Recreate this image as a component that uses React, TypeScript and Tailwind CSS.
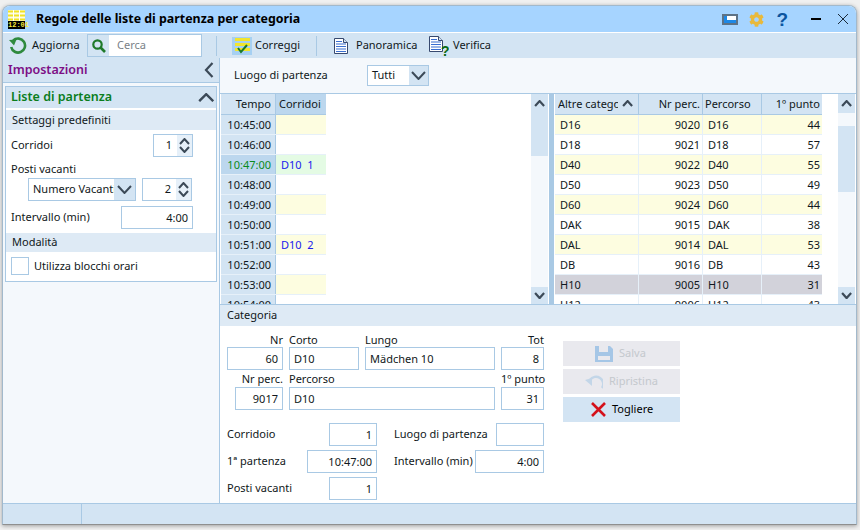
import { FaCog } from "react-icons/fa";

const timeRows = [
  { time: "10:45:00", text: "", bg: "bg-[#fdfde0]" },
  { time: "10:46:00", text: "", bg: "bg-white" },
  { time: "10:47:00", text: "D10  1", bg: "bg-[#e4fbe4]", active: true },
  { time: "10:48:00", text: "", bg: "bg-white" },
  { time: "10:49:00", text: "", bg: "bg-[#fdfde0]" },
  { time: "10:50:00", text: "", bg: "bg-white" },
  { time: "10:51:00", text: "D10  2", bg: "bg-[#fdfde0]" },
  { time: "10:52:00", text: "", bg: "bg-white" },
  { time: "10:53:00", text: "", bg: "bg-[#fdfde0]" },
  { time: "10:54:00", text: "", bg: "bg-white" },
];

const catRows = [
  ["D16", "9020", "D16", "44"],
  ["D18", "9021", "D18", "57"],
  ["D40", "9022", "D40", "55"],
  ["D50", "9023", "D50", "49"],
  ["D60", "9024", "D60", "44"],
  ["DAK", "9015", "DAK", "38"],
  ["DAL", "9014", "DAL", "53"],
  ["DB", "9016", "DB", "43"],
  ["H10", "9005", "H10", "31"],
  ["H12", "9006", "H12", "43"],
];

function Chev({ w, h, up, sw = 2 }: { w: number; h: number; up?: boolean; sw?: number }) {
  const pad = sw / 2;
  const pts = up
    ? `${pad},${h + pad} ${w / 2 + pad},${pad} ${w + pad},${h + pad}`
    : `${pad},${pad} ${w / 2 + pad},${h + pad} ${w + pad},${pad}`;
  return (
    <svg width={w + sw} height={h + sw} className="shrink-0">
      <polyline points={pts} fill="none" stroke="#3c4a58" strokeWidth={sw} />
    </svg>
  );
}

function Cross({ size, color, sw }: { size: number; color: string; sw: number }) {
  return (
    <svg width={size} height={size} viewBox={`0 0 ${size} ${size}`} className="shrink-0">
      <path d={`M1 1L${size - 1} ${size - 1}M${size - 1} 1L1 ${size - 1}`} stroke={color} strokeWidth={sw} />
    </svg>
  );
}

function Field({ value, className, right }: { value: string; className: string; right?: boolean }) {
  return (
    <div
      className={`h-[23px] border border-[#a9c9e4] bg-white px-[4px] leading-[21px] ${right ? "text-right" : ""} ${className}`}
    >
      {value}
    </div>
  );
}

function Spin({ value, className }: { value: string; className: string }) {
  return (
    <div className={`flex h-[23px] items-center border border-[#a9c9e4] bg-white ${className}`}>
      <span className="flex-1 pr-[4px] text-right">{value}</span>
      <div className="flex h-full w-[16px] flex-col justify-between border-l border-white bg-[#e6f0f9] py-[3px] pl-[2px]">
        <Chev w={9} h={5} up />
        <Chev w={9} h={5} />
      </div>
    </div>
  );
}

function ScrollBar({ thumbTop, thumbHeight }: { thumbTop: string; thumbHeight: string }) {
  return (
    <div className="flex h-full w-[17px] shrink-0 flex-col bg-[#f4f8fc]">
      <div className="flex h-[19px] items-center justify-center bg-[#d3e4f3]">
        <Chev w={9} h={5} up sw={2.2} />
      </div>
      <div className="flex-1">
        <div className={`${thumbTop} ${thumbHeight} bg-[#d3e4f3]`} />
      </div>
      <div className="flex h-[17px] items-center justify-center bg-[#d3e4f3]">
        <Chev w={9} h={5} sw={2.2} />
      </div>
    </div>
  );
}

function SheetIcon({ question }: { question?: boolean }) {
  return (
    <svg width={question ? 20 : 14} height={question ? 20 : 16} viewBox={question ? "0 0 20 20" : "0 0 14 16"}>
      <path d="M0.5 0.5h9l4 4v11h-13z" fill="#fff" stroke="#37496f" />
      <path d="M9.5 0.5v4h4" fill="#d3e4f3" stroke="#37496f" />
      <path d="M2 3.5h6M2 6h10M2 8.5h10M2 11h10M2 13.5h10" stroke="#3a6fd0" strokeWidth="1.2" />
      {question && (
        <text x="12" y="20" fontSize="14" fontWeight="700" fill="#0b6b12" fontFamily="Liberation Sans">
          ?
        </text>
      )}
    </svg>
  );
}

export default function App() {
  return (
    <div className="h-[530px] w-[860px] overflow-hidden bg-[#f0f0f0] pb-[5px] pl-[2px] pr-[3px] pt-[5px] font-['Noto_Sans','Open_Sans',sans-serif] text-[11px] text-[#101820]">
      <div className="flex h-full flex-col overflow-hidden rounded-t-[8px] border border-[#a2b9cc] border-b-[#8f8f8f] bg-white shadow-[0_1px_4px_rgba(0,0,0,0.35)]">
        {/* title bar */}
        <div className="flex h-[27px] shrink-0 items-center border-b border-white bg-[#a6d4ff] pl-[5px] pr-[7px]">
          <div className="flex h-[19px] w-[17px] flex-col">
            <svg width="17" height="11" viewBox="0 0 17 11">
              <rect width="17" height="11" fill="#fdfde0" />
              <path d="M0 1.5h17M0 5.5h17M0 9.5h17" stroke="#f0e226" strokeWidth="2" />
              <path d="M5.5 0v11M11.5 0v11" stroke="#fff" />
            </svg>
            <div className="h-[8px] bg-black text-center font-['Liberation_Mono',monospace] text-[7px] font-bold leading-[8px] text-[#f3e63a]">
              12:01
            </div>
          </div>
          <span className="ml-[11px] text-[12.4px] font-bold text-black">Regole delle liste di partenza per categoria</span>
          <div className="ml-auto flex items-center">
            <div className="h-[11px] w-[16px] border-2 border-[#5d7286] bg-[#1e88e5]">
              <div className="ml-auto h-[4px] w-[9px] bg-white" />
            </div>
            <FaCog size={15} className="ml-[11px] text-[#e8b93c]" />
            <span className="ml-[12px] font-['Liberation_Sans',sans-serif] text-[19px] font-bold leading-none text-[#0c559f]">?</span>
            <div className="ml-[23px] h-[1.5px] w-[10px] bg-black" />
            <div className="ml-[16px]">
              <Cross size={12} color="#1a2a3a" sw={1} />
            </div>
          </div>
        </div>

        {/* toolbar */}
        <div className="flex h-[25px] shrink-0 items-center bg-[#d3e4f3] pl-[5px]">
          <svg width="20" height="18" viewBox="0 0 20 18" fill="none" stroke="#2f8a3e" strokeWidth="2.6" className="shrink-0">
            <path d="M5.2 3.5A7 7 0 1 1 3.2 10" />
            <path d="M1 3l7.5-.5-2.5 6z" fill="#2f8a3e" stroke="none" />
          </svg>
          <span className="ml-[4px] w-[55px]">Aggiorna</span>
          <div className="flex h-[23px] w-[115px] items-center border border-[#a9c9e4]">
            <div className="flex h-full w-[21px] items-center justify-center">
              <svg width="14" height="14" viewBox="0 0 14 14" fill="none" stroke="#1f7a2a" strokeWidth="2.2">
                <circle cx="5.5" cy="5.5" r="4.2" />
                <path d="M8.5 8.5L13 13" strokeWidth="2.6" />
              </svg>
            </div>
            <span className="flex h-full flex-1 items-center bg-white pl-[8px] text-[#7a8288]">Cerca</span>
          </div>
          <div className="ml-[14px] h-[20px] w-px bg-[#a9c9e4]" />
          <svg className="ml-[15px] shrink-0" width="20" height="18" viewBox="0 0 20 18">
            <rect x="0" y="0" width="20" height="18" fill="#a6d0f2" />
            <rect x="3" y="1" width="15" height="3" fill="#f2e52e" />
            <rect x="3" y="6" width="15" height="3" fill="#f2e52e" />
            <rect x="3" y="11" width="15" height="3" fill="#f2e52e" />
            <path d="M6 11l3 4 6-7" fill="none" stroke="#1c7a2c" strokeWidth="2" />
          </svg>
          <span className="ml-[3px] w-[61px]">Correggi</span>
          <div className="h-[20px] w-px bg-[#a9c9e4]" />
          <div className="ml-[17px] flex">
            <SheetIcon />
          </div>
          <span className="ml-[8px] w-[73px]">Panoramica</span>
          <div className="flex">
            <SheetIcon question />
          </div>
          <span className="ml-[4px]">Verifica</span>
        </div>

        <div className="flex min-h-0 flex-1">
          {/* left panel */}
          <div className="w-[217px] shrink-0 border-r border-[#a9c9e4] bg-[#f4f8fc]">
            <div className="flex h-[25px] items-center justify-between border-b border-[#a9c9e4] bg-[#d3e4f3] pl-[5px] pr-[5px]">
              <span className="text-[12.5px] font-semibold text-[#7d0f86]">Impostazioni</span>
              <svg width="10" height="16" viewBox="0 0 10 16" fill="none" stroke="#3c4a58" strokeWidth="2.2">
                <path d="M8.5 1L2 8l6.5 7" />
              </svg>
            </div>
            <div className="mx-[2px] mt-[3px] border border-[#a9c9e4] bg-white">
              <div className="flex h-[21px] items-center justify-between bg-[#d3e4f3] pl-[5px] pr-[2px]">
                <span className="text-[12.5px] font-semibold text-[#0a7d1c]">Liste di partenza</span>
                <Chev w={14} h={7} up sw={2.4} />
              </div>
              <div className="mt-[2px] flex h-[20px] items-center bg-[#deeaf5] pl-[6px]">Settaggi predefiniti</div>
              <div className="mt-[4px] flex h-[23px] items-center justify-between pl-[5px] pr-[23px]">
                <span>Corridoi</span>
                <Spin value="1" className="w-[40px]" />
              </div>
              <div className="mt-[4px] h-[15px] pl-[5px] leading-[15px]">Posti vacanti</div>
              <div className="mt-[2px] flex items-center pl-[22px]">
                <div className="flex h-[23px] w-[108px] items-center border border-[#a9c9e4]">
                  <span className="w-[85px] overflow-hidden whitespace-nowrap pl-[4px]">Numero Vacanti</span>
                  <div className="flex h-full flex-1 items-center justify-center bg-[#d3e4f3]">
                    <Chev w={13} h={7} sw={2} />
                  </div>
                </div>
                <Spin value="2" className="ml-[6px] w-[50px]" />
              </div>
              <div className="mt-[5px] flex h-[23px] items-center justify-between pl-[5px] pr-[23px]">
                <span>Intervallo (min)</span>
                <Field value="4:00" right className="w-[72px]" />
              </div>
              <div className="mt-[4px] flex h-[19px] items-center bg-[#deeaf5] pl-[6px]">Modalità</div>
              <div className="flex items-center pb-[6px] pl-[5px] pt-[5px]">
                <div className="h-[18px] w-[18px] border border-[#a9c9e4] bg-white" />
                <span className="ml-[5px]">Utilizza blocchi orari</span>
              </div>
            </div>
          </div>

          {/* right area */}
          <div className="flex min-w-0 flex-1 flex-col">
            <div className="flex h-[35px] shrink-0 items-center bg-[#f4f8fc] pl-[14px]">
              <span className="w-[133px]">Luogo di partenza</span>
              <div className="flex h-[21px] w-[62px] items-center border border-[#a9c9e4] bg-white">
                <span className="flex-1 pl-[4px]">Tutti</span>
                <div className="flex h-full w-[19px] items-center justify-center bg-[#d3e4f3]">
                  <Chev w={13} h={7} sw={2} />
                </div>
              </div>
            </div>

            <div className="flex h-[212px] shrink-0 border-y border-[#a9c9e4] bg-white">
              {/* start times grid */}
              <div className="ml-px w-[105px] shrink-0 overflow-hidden">
                <div className="flex h-[21px] border-b border-[#a9c9e4]">
                  <div className="w-[55px] border-r border-[#a9c9e4] bg-[#d3e4f3] pr-[4px] text-right leading-[20px]">Tempo</div>
                  <div className="w-[50px] overflow-hidden whitespace-nowrap bg-[#bcd7ee] pl-[3px] leading-[20px]">Corridoi</div>
                </div>
                {timeRows.map((row) => (
                  <div key={row.time} className="flex h-[20px] border-b border-[#e6f0f9]">
                    <div
                      className={`w-[55px] border-r border-[#a9c9e4] pr-[4px] text-right leading-[19px] ${row.active ? "bg-[#bcd7ee] text-[#0a8a1c]" : "bg-[#d3e4f3]"}`}
                    >
                      {row.time}
                    </div>
                    <div className={`w-[50px] whitespace-pre pl-[5px] leading-[19px] text-[#1a1aee] ${row.bg}`}>{row.text}</div>
                  </div>
                ))}
              </div>
              <div className="flex-1" />
              <ScrollBar thumbTop="mt-0" thumbHeight="h-[43px]" />
              <div className="ml-px w-[5px] shrink-0 bg-[#a9c9e4]" />

              {/* other categories grid */}
              <div className="ml-[1px] w-[267px] shrink-0 overflow-hidden">
                <div className="flex h-[21px] border-b border-[#a9c9e4] bg-[#d3e4f3] leading-[20px]">
                  <div className="flex w-[84px] items-center justify-between overflow-hidden whitespace-nowrap border-r border-[#a9c9e4] pl-[3px] pr-[5px]">
                    <span className="w-[60px] overflow-hidden">Altre categorie</span>
                    <Chev w={9} h={5} up sw={2.2} />
                  </div>
                  <div className="w-[64px] border-r border-[#a9c9e4] pr-[2px] text-right">Nr perc.</div>
                  <div className="w-[59px] border-r border-[#a9c9e4] pl-[2px]">Percorso</div>
                  <div className="w-[60px] pr-[2px] text-right">1º punto</div>
                </div>
                {catRows.map((row, i) => (
                  <div
                    key={row[0]}
                    className={`flex h-[20px] border-b border-[#e6f0f9] leading-[19px] ${row[0] === "H10" ? "bg-[#d2d2da]" : i % 2 === 0 ? "bg-[#fdfde0]" : "bg-white"}`}
                  >
                    <div className="w-[84px] border-r border-[#e6f0f9] pl-[5px]">{row[0]}</div>
                    <div className="w-[64px] border-r border-[#e6f0f9] pr-[2px] text-right">{row[1]}</div>
                    <div className="w-[59px] border-r border-[#e6f0f9] pl-[5px]">{row[2]}</div>
                    <div className="w-[60px] pr-[2px] text-right">{row[3]}</div>
                  </div>
                ))}
              </div>
              <div className="w-[16px] shrink-0" />
              <ScrollBar thumbTop="mt-[13px]" thumbHeight="h-[66px]" />
              <div className="w-px shrink-0" />
            </div>

            <div className="flex h-[21px] shrink-0 items-center bg-[#deeaf5] pl-[7px]">Categoria</div>

            {/* category form */}
            <div className="flex flex-1 pl-[7px] pt-[7px]">
              <div className="w-[317px]">
                <div className="flex h-[14px] leading-[14px]">
                  <div className="w-[56px] text-right">Nr</div>
                  <div className="ml-[6px] w-[70px]">Corto</div>
                  <div className="ml-[6px] w-[130px]">Lungo</div>
                  <div className="ml-[6px] w-[43px] text-right">Tot</div>
                </div>
                <div className="flex">
                  <Field value="60" right className="w-[56px]" />
                  <Field value="D10" className="ml-[6px] w-[70px]" />
                  <Field value="Mädchen 10" className="ml-[6px] w-[130px]" />
                  <Field value="8" right className="ml-[6px] w-[43px]" />
                </div>
                <div className="mt-px flex h-[16px] leading-[16px]">
                  <div className="w-[56px] whitespace-nowrap text-right">Nr perc.</div>
                  <div className="ml-[6px] w-[206px]">Percorso</div>
                  <div className="ml-[6px] w-[43px] whitespace-nowrap text-right">1º punto</div>
                </div>
                <div className="flex">
                  <Field value="9017" right className="ml-[8px] w-[48px]" />
                  <Field value="D10" className="ml-[6px] w-[206px]" />
                  <Field value="31" right className="ml-[6px] w-[43px]" />
                </div>
                <div className="mt-[13px] flex items-center">
                  <span className="w-[102px]">Corridoio</span>
                  <Field value="1" right className="w-[48px]" />
                  <span className="ml-[17px] w-[102px] whitespace-nowrap">Luogo di partenza</span>
                  <Field value="" className="w-[48px]" />
                </div>
                <div className="mt-[4px] flex items-center">
                  <span className="w-[80px]">1ª partenza</span>
                  <Field value="10:47:00" right className="w-[70px]" />
                  <span className="ml-[17px] w-[81px] whitespace-nowrap">Intervallo (min)</span>
                  <Field value="4:00" right className="w-[69px]" />
                </div>
                <div className="mt-[4px] flex items-center">
                  <span className="w-[102px]">Posti vacanti</span>
                  <Field value="1" right className="w-[48px]" />
                </div>
              </div>

              <div className="ml-[19px] mt-[8px] flex w-[117px] flex-col gap-[3px]">
                <div className="flex h-[25px] items-center bg-[#e9e9ee] pl-[33px] text-[#c4c8cd]">
                  <svg width="18" height="18" viewBox="0 0 18 18" className="-ml-[1px] shrink-0">
                    <path d="M0 1h15l3 3v13H0z" fill="#a5c6e6" />
                    <rect x="4" y="1" width="9" height="6" fill="#e9e9ee" />
                    <rect x="3" y="11" width="12" height="4" fill="#e9e9ee" />
                  </svg>
                  <span className="ml-[6px]">Salva</span>
                </div>
                <div className="flex h-[25px] items-center bg-[#e9e9ee] pl-[22px] text-[#c4c8cd]">
                  <svg width="18" height="14" viewBox="0 0 18 14" fill="none" className="shrink-0">
                    <path d="M17 13A7 7 0 0 0 5 5" stroke="#c3d6e8" strokeWidth="2.4" />
                    <path d="M0 5l7-2v8z" fill="#c3d6e8" />
                  </svg>
                  <span className="ml-[6px]">Ripristina</span>
                </div>
                <div className="flex h-[25px] items-center bg-[#d3e4f3] pl-[28px] text-black">
                  <Cross size={15} color="#d4111b" sw={2.6} />
                  <span className="ml-[6px]">Togliere</span>
                </div>
              </div>
            </div>
          </div>
        </div>

        {/* status bar */}
        <div className="flex h-[21px] shrink-0 border-t border-[#a9c9e4] bg-[#d3e4f3]">
          <div className="w-[79px] border-r border-[#a9c9e4]" />
        </div>
      </div>
    </div>
  );
}
